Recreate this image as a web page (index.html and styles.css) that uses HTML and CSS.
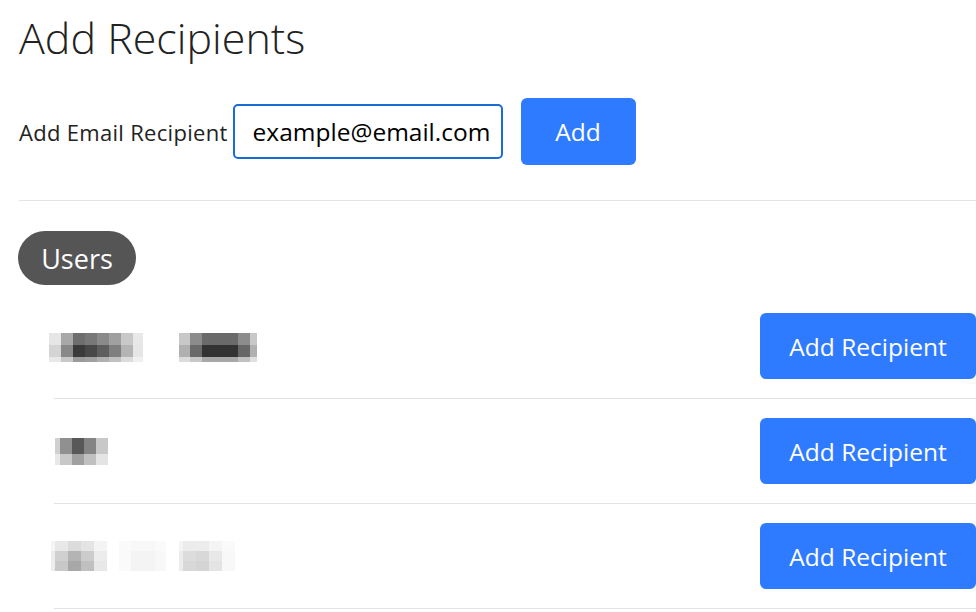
FILE: index.html
```html
<!DOCTYPE html>
<html lang="en">
<head>
<meta charset="utf-8">
<title>Add Recipients</title>
<link rel="stylesheet" href="styles.css">
</head>
<body>
<main class="page">
  <h1 class="title">Add Recipients</h1>
  <form class="email-form">
    <label class="email-label" for="email">Add Email Recipient</label>
    <input class="email-input" id="email" type="text" value="example@email.com">
    <button class="btn btn-add" type="button">Add</button>
  </form>
  <hr class="divider">
  <span class="pill">Users</span>
  <ul class="users">
    <li class="user">
      <div class="name name-1">
        <div class="mosaic m8">
          <i class="e6"></i><i class="a8"></i><i class="6e"></i><i class="78"></i><i class="8a"></i><i class="a0"></i><i class="c8"></i><i class="e8"></i>
          <i class="d4"></i><i class="88"></i><i class="3a"></i><i class="48"></i><i class="5e"></i><i class="7e"></i><i class="b4"></i><i class="e6"></i>
          <i class="e8"></i><i class="c8"></i><i class="9a"></i><i class="a0"></i><i class="b0"></i><i class="c0"></i><i class="dc"></i><i class="f0"></i>
        </div>
        <div class="mosaic m7">
          <i class="c8"></i><i class="8c"></i><i class="6a"></i><i class="6a"></i><i class="6a"></i><i class="8c"></i><i class="c8"></i>
          <i class="b0"></i><i class="6a"></i><i class="33"></i><i class="33"></i><i class="33"></i><i class="66"></i><i class="b0"></i>
          <i class="dc"></i><i class="c8"></i><i class="a8"></i><i class="a8"></i><i class="a8"></i><i class="c0"></i><i class="e0"></i>
        </div>
      </div>
      <button class="btn btn-recipient" type="button">Add Recipient</button>
    </li>
    <li class="user">
      <div class="name name-2">
        <div class="mosaic m5 short">
          <i class="d0"></i><i class="90"></i><i class="58"></i><i class="84"></i><i class="c8"></i>
          <i class="e8"></i><i class="c8"></i><i class="a0"></i><i class="c0"></i><i class="e4"></i>
        </div>
      </div>
      <button class="btn btn-recipient" type="button">Add Recipient</button>
    </li>
    <li class="user">
      <div class="name name-3">
        <div class="mosaic m5w tall">
          <i class="f4"></i><i class="e8"></i><i class="dc"></i><i class="e4"></i><i class="f4"></i>
          <i class="ec"></i><i class="d0"></i><i class="b4"></i><i class="cc"></i><i class="ec"></i>
          <i class="ec"></i><i class="c8"></i><i class="a8"></i><i class="c0"></i><i class="e8"></i>
        </div>
        <div class="mosaic m4 tall">
          <i class="fa"></i><i class="f8"></i><i class="f8"></i><i class="fa"></i>
          <i class="fa"></i><i class="f4"></i><i class="f4"></i><i class="f8"></i>
          <i class="fa"></i><i class="f4"></i><i class="f4"></i><i class="f8"></i>
        </div>
        <div class="mosaic m5w tall">
          <i class="f4"></i><i class="ec"></i><i class="ec"></i><i class="f4"></i><i class="fa"></i>
          <i class="ec"></i><i class="dc"></i><i class="d8"></i><i class="e8"></i><i class="f8"></i>
          <i class="ec"></i><i class="d8"></i><i class="d4"></i><i class="e4"></i><i class="f8"></i>
        </div>
      </div>
      <button class="btn btn-recipient" type="button">Add Recipient</button>
    </li>
  </ul>
</main>
</body>
</html>
```
FILE: styles.css
```css
* { box-sizing: border-box; }
html, body { margin: 0; padding: 0; background: #fff; }
body {
  font-family: "Open Sans", "Noto Sans", "Liberation Sans", sans-serif;
  color: #222;
  overflow: hidden;
}
.page {
  padding: 12px 0 0 19px;
  width: 976px;
}
.title {
  margin: 0;
  font-weight: 300;
  font-size: 43px;
  line-height: 52px;
  color: #222;
}
.email-form {
  display: flex;
  align-items: center;
  margin-top: 34px;
}
.email-label {
  font-size: 22px;
  letter-spacing: 0.3px;
  margin-right: 5px;
}
.email-input {
  width: 270px;
  height: 55px;
  border: 2px solid #1a6bd4;
  border-radius: 5px;
  padding: 0 6px 0 18px;
  font-family: inherit;
  font-size: 24.5px;
  color: #000;
  outline: none;
}
.btn {
  border: 0;
  border-radius: 6px;
  background: #2f7bff;
  color: #fff;
  font-family: inherit;
  font-size: 24.5px;
  cursor: pointer;
}
.btn-add {
  width: 115px;
  height: 67px;
  margin-left: 18px;
}
.divider {
  border: 0;
  border-top: 1px solid #e3e3e3;
  margin: 35px 0 30px;
}
.pill {
  display: inline-flex;
  align-items: center;
  justify-content: center;
  width: 118px;
  height: 54px;
  margin-left: -1px;
  border-radius: 27px;
  background: #555;
  color: #fff;
  font-size: 27px;
}
.users {
  list-style: none;
  margin: 9px 0 0 35px;
  padding: 0;
}
.user {
  display: flex;
  align-items: center;
  justify-content: space-between;
  padding: 19px 0;
  border-bottom: 1px solid #e3e3e3;
}
.btn-recipient {
  width: 216px;
  height: 66px;
}
.name { display: flex; align-items: center; }
.name-1 { margin-left: -5px; margin-top: 3px; gap: 36px; }
.name-2 { margin-left: 1px; }
.name-3 { margin-left: -3px; gap: 12px; }
.name-3 .m4 { margin-right: 1px; }
.mosaic { display: grid; grid-template-rows: 12px 12px 5px; }
.mosaic.short { grid-template-rows: 16px 11px; }
.mosaic.tall { grid-template-rows: 10px 10px 10px; }
.m8 { grid-template-columns: repeat(7, 12px) 10px; }
.m7 { grid-template-columns: 11px 12px 12px 12px 12px 12px 7px; }
.m5 { grid-template-columns: 5px repeat(4, 12px); }
.m5w { grid-template-columns: 4px repeat(4, 13px); }
.m4 { grid-template-columns: 12px 12px 12px 11px; }
.mosaic i { display: block; }
.e6 { background: #e6e6e6; } .a8 { background: #a8a8a8; } .\36 e { background: #6e6e6e; }
.\37 8 { background: #787878; } .\38 a { background: #8a8a8a; } .a0 { background: #a0a0a0; }
.c8 { background: #c8c8c8; } .e8 { background: #e8e8e8; } .d4 { background: #d4d4d4; }
.\38 8 { background: #888; } .\33 a { background: #3a3a3a; } .\34 8 { background: #484848; }
.\35 e { background: #5e5e5e; } .\37 e { background: #7e7e7e; } .b4 { background: #b4b4b4; }
.\39 a { background: #9a9a9a; } .b0 { background: #b0b0b0; } .c0 { background: #c0c0c0; }
.dc { background: #dcdcdc; } .f0 { background: #f0f0f0; } .\38 c { background: #8c8c8c; }
.\36 a { background: #6a6a6a; } .\33 3 { background: #333; } .\36 6 { background: #666; }
.e0 { background: #e0e0e0; } .d0 { background: #d0d0d0; } .\39 0 { background: #909090; }
.\35 8 { background: #585858; } .\38 4 { background: #848484; } .e4 { background: #e4e4e4; }
.f4 { background: #f4f4f4; } .ec { background: #ececec; } .cc { background: #ccc; }
.fa { background: #fafafa; } .f8 { background: #f8f8f8; } .d8 { background: #d8d8d8; }
```
